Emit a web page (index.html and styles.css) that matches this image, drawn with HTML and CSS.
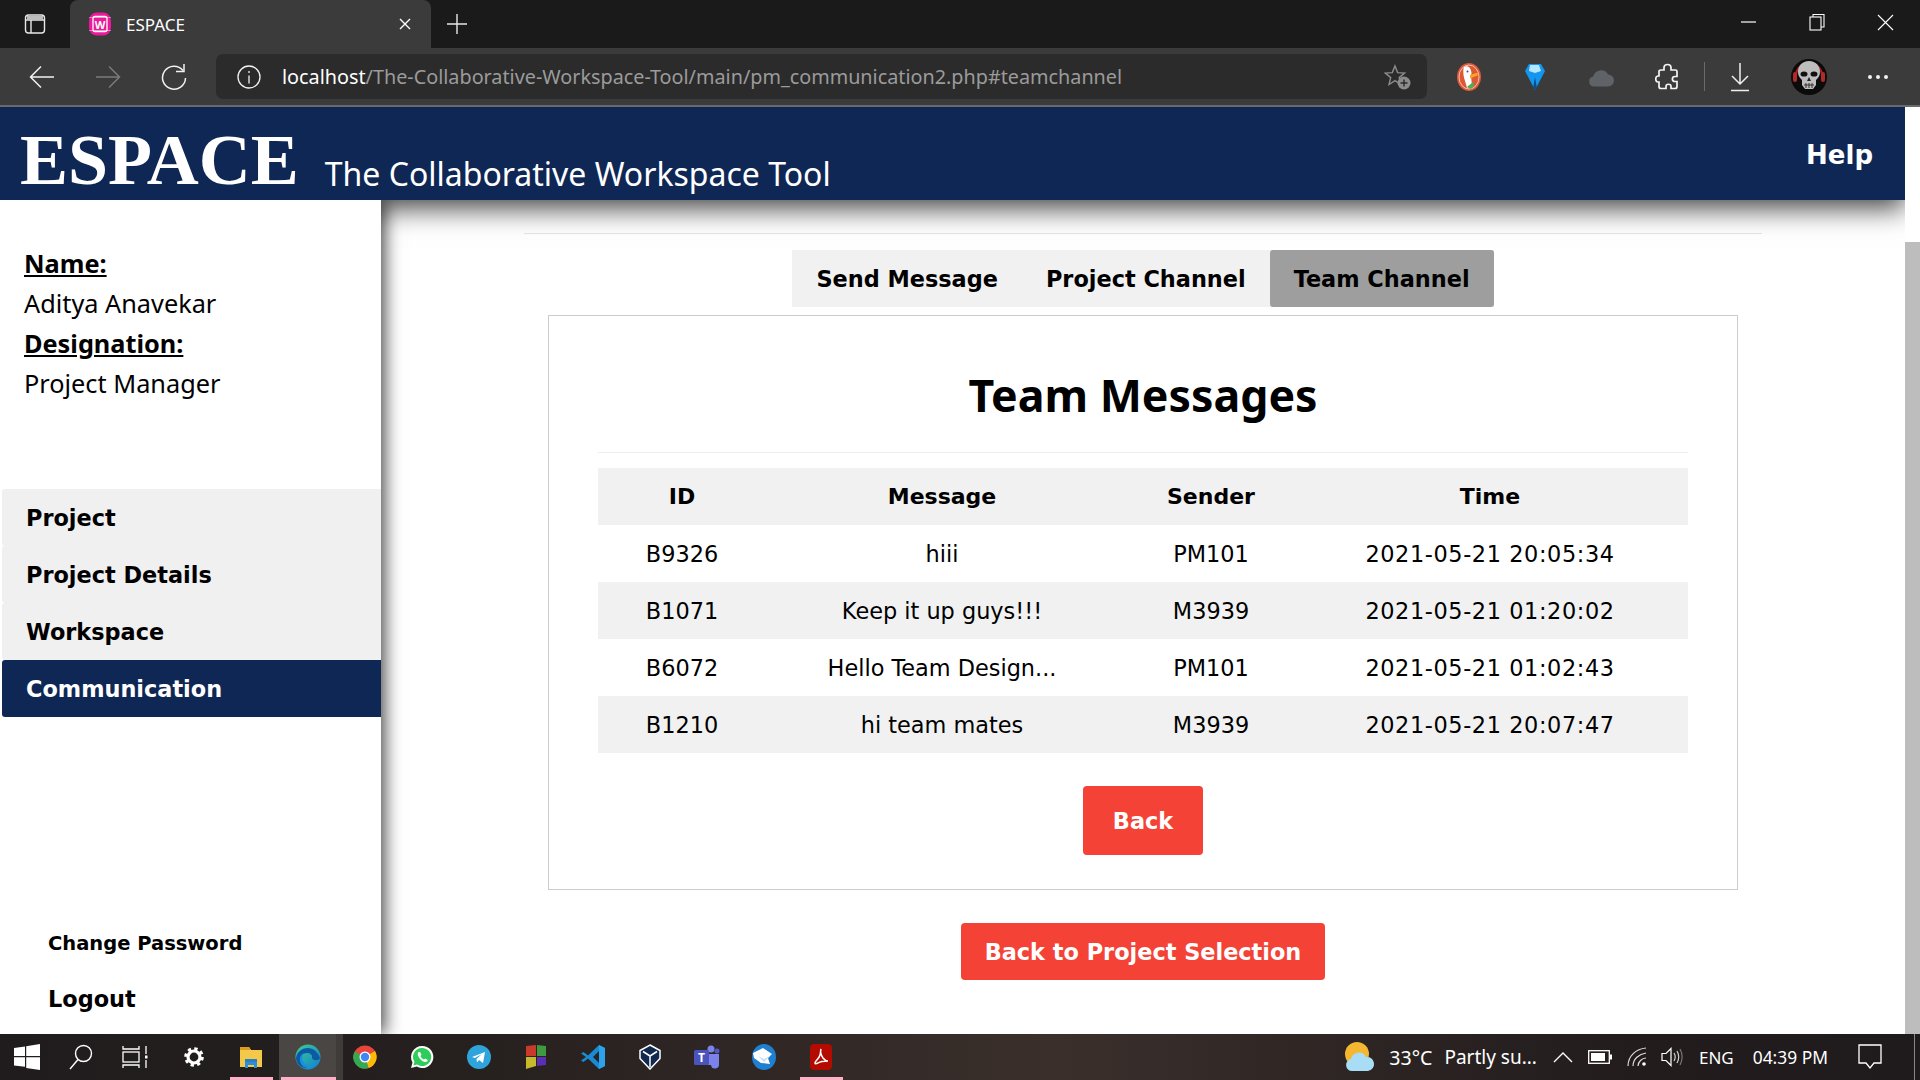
FILE: index.html
```html
<!DOCTYPE html>
<html lang="en">
<head>
<meta charset="utf-8">
<title>ESPACE</title>
<link rel="stylesheet" href="styles.css">
</head>
<body>
<div class="browser">
  <div class="tabstrip">
    <div class="strip-slot">
      <svg width="22" height="22" viewBox="0 0 22 22" fill="none" stroke="#e8e8e8" stroke-width="1.4"><rect x="1.5" y="2" width="19" height="18" rx="3"/><path d="M1.5 7h19M7 7v13"/><path d="M3 2.8h16v4H3z" fill="#bdbdbd" stroke="none"/></svg>
    </div>
    <div class="tab">
      <svg class="favicon" width="24" height="24" viewBox="0 0 24 24"><rect x="1" y="0.500" width="22" height="23" rx="8" fill="#ea1a9b"/><path d="M1 5.500h22M1 18.500h22" stroke="#fff" stroke-width=".8" stroke-opacity=".5"/><rect x="5" y="4.500" width="14" height="15" rx="2" fill="none" stroke="#fff" stroke-width="1.300"/><text x="12" y="16.500" class="fav-w">W</text></svg>
      <span class="tab-title">ESPACE</span>
      <svg class="tab-close" width="14" height="14" viewBox="0 0 14 14" stroke="#fff" stroke-width="1.4"><path d="M2 2l10 10M12 2L2 12"/></svg>
    </div>
    <div class="plus-slot">
      <svg width="22" height="22" viewBox="0 0 22 22" stroke="#e8e8e8" stroke-width="1.4"><path d="M11 1v20M1 11h20"/></svg>
    </div>
    <div class="win-buttons">
      <div class="win-btn"><svg width="16" height="16" viewBox="0 0 16 16" stroke="#fff" stroke-width="1.2"><path d="M0 8h15"/></svg></div>
      <div class="win-btn"><svg width="16" height="18" viewBox="0 0 16 18" fill="none" stroke="#fff" stroke-width="1.1"><rect x="1" y="4" width="11" height="13"/><path d="M4 4V1.500h11V14h-3"/></svg></div>
      <div class="win-btn"><svg width="17" height="17" viewBox="0 0 17 17" stroke="#fff" stroke-width="1.1"><path d="M1 1l15 15M16 1L1 16"/></svg></div>
    </div>
  </div>
  <div class="toolbar">
    <div class="tool-slot"><svg width="26" height="24" viewBox="0 0 26 24" fill="none" stroke="#f2f2f2" stroke-width="1.5"><path d="M25 12H1.500M12 1.500L1.500 12 12 22.500"/></svg></div>
    <div class="tool-slot"><svg width="26" height="24" viewBox="0 0 26 24" fill="none" stroke="#7b7b7b" stroke-width="1.5"><path d="M1 12h23.500M14 1.500L24.500 12 14 22.500"/></svg></div>
    <div class="tool-slot"><svg width="26" height="28" viewBox="0 0 26 28" fill="none" stroke="#f2f2f2" stroke-width="1.5"><path d="M22 7.500A11.500 11.500 0 1 0 24.500 15"/><path d="M23 1v7.500h-8"/></svg></div>
    <div class="address">
      <svg class="addr-info" width="24" height="24" viewBox="0 0 24 24" fill="none" stroke="#f2f2f2" stroke-width="1.3"><circle cx="12" cy="12" r="11"/><path d="M12 10.500v8M12 6v2"/></svg>
      <span class="url"><span class="url-host">localhost</span>/The-Collaborative-Workspace-Tool/main/pm_communication2.php#teamchannel</span>
      <svg class="addr-star" width="28" height="28" viewBox="0 0 28 28"><path d="M11 3l2.600 6.600 7 .5-5.400 4.500 1.700 6.900L11 17.700l-6 3.800 1.700-6.900L1.300 10.100l7-.5z" fill="none" stroke="#8c8c8c" stroke-width="1.4"/><circle cx="20" cy="20" r="6.500" fill="#8c8c8c"/><path d="M20 16.500v7M16.500 20h7" stroke="#2b2b2b" stroke-width="1.4"/></svg>
    </div>
    <div class="tool-slot tool-first">
      <svg width="26" height="30" viewBox="0 0 26 30"><ellipse cx="13" cy="15" rx="12" ry="14" fill="#de5833"/><ellipse cx="13" cy="15" rx="10" ry="12" fill="none" stroke="#f3c4b6" stroke-width="1"/><path d="M8 5c4-2 7 1 7.500 6l-.5 3 1 10-5 2c-1-5-3-9-3.500-13C7.300 10 7 7 8 5z" fill="#fff"/><path d="M14 13l8-2.500-.5 3-7.500 3z" fill="#f5a623"/><path d="M11 25l6-5 1 4-3 3z" fill="#4caf50"/><circle cx="11.500" cy="9.500" r="1" fill="#2d4f8e"/></svg>
    </div>
    <div class="tool-slot">
      <svg width="22" height="28" viewBox="0 0 22 28"><path d="M5 1h12l4 7-10 19L1 8z" fill="#1296f0"/><path d="M6 2h9l2 6-6 2-6-2z" fill="#b9e6ff"/><path d="M11 14l2 12h-4z" fill="#0a4d88"/></svg>
    </div>
    <div class="tool-slot">
      <svg width="26" height="22" viewBox="0 0 26 22"><path d="M6 20.500a5 5 0 0 1-.8-9.900A8 8 0 0 1 20 8.500a6 6 0 0 1 0 12z" fill="#5f6368"/></svg>
    </div>
    <div class="tool-slot">
      <svg width="24" height="28" viewBox="0 0 24 28" fill="none" stroke="#f5f5f5" stroke-width="1.7"><path d="M9 4.500c0-4 7-4 7 0v2.500h4.500c1 0 1.500.5 1.500 1.500v5h-2c-3.500 0-3.500 5 0 5h2v5c0 1-.5 2-2 2h-4v-2c0-3-5-3-5 0v2H6c-1 0-2-.5-2-2v-4.500H3c-3 0-3-6 0-6h1V8.500C4 7.500 4.500 7 6 7h3z"/></svg>
    </div>
    <div class="tool-sep"></div>
    <div class="tool-slot">
      <svg width="20" height="30" viewBox="0 0 20 30" fill="none" stroke="#efefef" stroke-width="1.5"><path d="M10 1v21M2 14l8 8 8-8M1 28.500h18"/></svg>
    </div>
    <div class="tool-slot tool-avatar">
      <svg width="38" height="36" viewBox="0 0 38 36"><ellipse cx="19" cy="18" rx="18" ry="18" fill="#0b0b0b"/><path d="M6 17a13 13 0 0 1 26 0" fill="none" stroke="#a22" stroke-width="2"/><rect x="3" y="13" width="4" height="10" rx="2" fill="#b22a2a"/><rect x="31" y="13" width="4" height="10" rx="2" fill="#b22a2a"/><path d="M19 2c7 0 11 5 11 11 0 4-2 6-4 8v5l-3 4h-8l-3-4v-5c-2-2-4-4-4-8C8 7 12 2 19 2z" fill="#bdbdbd"/><ellipse cx="14" cy="15" rx="3.500" ry="2.600" fill="#111"/><ellipse cx="24" cy="15" rx="3.500" ry="2.600" fill="#111"/><path d="M19 18l-2 4h4z" fill="#222"/><path d="M14 26h10M16 24v5M19 24v5M22 24v5" stroke="#333" stroke-width="1"/></svg>
    </div>
    <div class="tool-slot">
      <svg width="22" height="6" viewBox="0 0 22 6" fill="#f2f2f2"><circle cx="3" cy="3" r="2"/><circle cx="11" cy="3" r="2"/><circle cx="19" cy="3" r="2"/></svg>
    </div>
  </div>
</div>

<div class="viewport">
  <div class="page">
    <header class="app-header">
      <h1 class="logo">ESPACE</h1>
      <span class="tagline">The Collaborative Workspace Tool</span>
      <a class="help">Help</a>
    </header>
    <div class="app-body">
      <aside class="sidebar">
        <div class="user-info">
          <div class="info-label">Name:</div>
          <div class="info-value">Aditya Anavekar</div>
          <div class="info-label">Designation:</div>
          <div class="info-value">Project Manager</div>
        </div>
        <nav class="side-nav">
          <a class="nav-item">Project</a>
          <a class="nav-item">Project Details</a>
          <a class="nav-item">Workspace</a>
          <a class="nav-item nav-active">Communication</a>
        </nav>
        <div class="side-links">
          <a class="link-small">Change Password</a>
          <a class="link-large">Logout</a>
        </div>
      </aside>
      <main class="main">
        <hr class="top-rule">
        <div class="tabs">
          <a class="tab-link">Send Message</a>
          <a class="tab-link">Project Channel</a>
          <a class="tab-link tab-current">Team Channel</a>
        </div>
        <section class="card">
          <h2 class="card-title">Team Messages</h2>
          <hr class="card-rule">
          <table class="msg-table">
            <colgroup><col class="col-id"><col class="col-msg"><col class="col-sender"><col class="col-time"></colgroup>
            <thead>
              <tr><th class="cell-id">ID</th><th>Message</th><th>Sender</th><th>Time</th></tr>
            </thead>
            <tbody>
              <tr><td class="cell-id">B9326</td><td>hiii</td><td>PM101</td><td class="cell-time">2021-05-21 20:05:34</td></tr>
              <tr class="row-alt"><td class="cell-id">B1071</td><td>Keep it up guys!!!</td><td>M3939</td><td class="cell-time">2021-05-21 01:20:02</td></tr>
              <tr><td class="cell-id">B6072</td><td>Hello Team Design...</td><td>PM101</td><td class="cell-time">2021-05-21 01:02:43</td></tr>
              <tr class="row-alt"><td class="cell-id">B1210</td><td>hi team mates</td><td>M3939</td><td class="cell-time">2021-05-21 20:07:47</td></tr>
            </tbody>
          </table>
          <a class="btn btn-back">Back</a>
        </section>
        <a class="btn btn-wide">Back to Project Selection</a>
      </main>
    </div>
  </div>
  <div class="scrollbar"><div class="scroll-thumb"></div></div>
</div>

<footer class="taskbar">
  <div class="tb-start"><svg width="26" height="26" viewBox="0 0 26 26" fill="#fff"><path d="M0 4l11-1.600V12H0zM12.200 2.200L26 0v12H12.200zM0 13.200h11v9.600L0 21.400zM12.200 13.200H26V26l-13.800-2z"/></svg></div>
  <div class="tb-sys"><svg width="24" height="26" viewBox="0 0 24 26" fill="none" stroke="#fff" stroke-width="1.4"><circle cx="14.500" cy="9.500" r="8"/><path d="M9 15.500L1 25"/></svg></div>
  <div class="tb-sys"><svg width="26" height="24" viewBox="0 0 26 24" fill="none" stroke="#fff" stroke-width="1.3"><path d="M1 1v3h16V1M1 23v-3h16v3"/><rect x="1" y="7" width="16" height="10"/><path d="M24 1v8M24 15v8"/><rect x="23" y="10.500" width="2.500" height="3" fill="#fff" stroke="none"/></svg></div>
  <div class="tb-icon tb-gear"><svg width="20" height="20" viewBox="0 0 20 20"><circle cx="10" cy="10" r="6" fill="none" stroke="#fff" stroke-width="3.200"/><circle cx="10" cy="10" r="8.300" fill="none" stroke="#fff" stroke-width="3" stroke-dasharray="3.300 3.220"/></svg></div>
  <div class="tb-icon"><svg width="24" height="24" viewBox="0 0 24 24"><path d="M1 2h9l2 3h11v17H1z" fill="#f4c94a"/><path d="M1 2h9l2 3H1z" fill="#dd9a20"/><path d="M6 16h12v7h-3v-3H9v3H6z" fill="#2f8fd6"/><path d="M6 14h12v3H6z" fill="#2a7fc4"/></svg></div>
  <div class="tb-icon tb-running">
    <svg width="26" height="26" viewBox="0 0 26 26"><defs><linearGradient id="edgeA" x1="0" y1="0" x2="1" y2="1"><stop offset="0" stop-color="#3ecf8e"/><stop offset="1" stop-color="#0f7fd0"/></linearGradient></defs><circle cx="13" cy="13" r="12.500" fill="url(#edgeA)"/><path d="M1 14C2 7 8 4 13 4c5 0 10 4 12 10-1 3-7 3-8 0 1-3-2-5-5-5-5 0-8 5-6 10 1 3 4 5 8 5-8 1-13-4-13-10z" fill="#0c59a4"/><path d="M7 21c-3-4-3-10 2-12-3 3-2 10 3 12 4 1 9 0 12-4-2 6-12 9-17 4z" fill="#1a8fe0"/></svg>
    <span class="tb-sliver"></span>
  </div>
  <div class="tb-icon"><svg width="24" height="24" viewBox="0 0 24 24"><circle cx="12" cy="12" r="11.500" fill="#e8453c"/><path d="M12 12L22 6a11.500 11.500 0 0 1-6.500 17z" fill="#fbbc05"/><path d="M12 12l3.500 11A11.500 11.500 0 0 1 1.700 6.500z" fill="#34a853"/><circle cx="12" cy="12" r="5.500" fill="#fff"/><circle cx="12" cy="12" r="4.200" fill="#4285f4"/></svg></div>
  <div class="tb-icon"><svg width="24" height="24" viewBox="0 0 24 24"><path d="M12 1a11 11 0 0 0-9.500 16.500L1 23l5.800-1.500A11 11 0 1 0 12 1z" fill="#fff"/><path d="M12 3a9 9 0 0 0-7.600 13.800L3.500 20.500l3.700-1A9 9 0 1 0 12 3z" fill="#2ecc5a"/><path d="M8.500 7c-1 1-1.200 3 .5 5.500 2 3 4.500 4.500 6.500 4.500 1.200 0 2.200-1 2.300-2l-2.500-1.500-1.200 1c-1.500-.5-3-2-3.600-3.600l1-1.200L10 7z" fill="#fff"/></svg></div>
  <div class="tb-icon"><svg width="24" height="24" viewBox="0 0 24 24"><circle cx="12" cy="12" r="12" fill="#2fa3dc"/><path d="M5 12l13-5-2 11-4-3-2 2.500-.5-3.500 5.500-5-7 4z" fill="#fff"/></svg></div>
  <div class="tb-icon"><svg width="24" height="26" viewBox="0 0 24 26"><path d="M2 2l10-1v11H2z" fill="#c93a2b"/><path d="M13 1l9 1v10h-9z" fill="#3e9a3e"/><path d="M2 13h10v9l-10 3z" fill="#c8b82b"/><path d="M13 13h9v8l-9 1z" fill="#5a2fb5"/></svg></div>
  <div class="tb-icon"><svg width="24" height="26" viewBox="0 0 24 26"><path d="M18 1l6 3v18l-6 3L7 14.500 2.500 18 0 16.500 5 13 0 9.500 2.500 8 7 11.500z" fill="#1a8ad4"/><path d="M18 7l-6 6 6 6z" fill="#25262b"/><path d="M18 1l6 3v18l-6 3z" fill="#2aa3ea"/></svg></div>
  <div class="tb-icon"><svg width="22" height="26" viewBox="0 0 22 26"><path d="M11 1l10 5.500v8L11 25 1 14.500v-8z" fill="#11294f" stroke="#fff" stroke-width="1.500"/><path d="M4 7.500l7 4.500 7-4.500M11 12v11" fill="none" stroke="#fff" stroke-width="1.500"/></svg></div>
  <div class="tb-icon"><svg width="26" height="26" viewBox="0 0 26 26"><circle cx="17" cy="5" r="3.500" fill="#7b83eb"/><circle cx="23" cy="7" r="2.500" fill="#5059c9"/><path d="M14 10h11v10a4 4 0 0 1-8 1h-3z" fill="#7b83eb"/><rect x="0" y="6" width="15" height="15" rx="1.500" fill="#4b53bc"/><text x="7.500" y="18" class="teams-t">T</text></svg></div>
  <div class="tb-icon"><svg width="24" height="26" viewBox="0 0 24 26"><ellipse cx="12" cy="13" rx="12" ry="13" fill="#1f7fd0"/><path d="M1 9l10-5 9 6-4 4 2 6-9-1-7-5z" fill="#fff"/><path d="M6 12l6 3 6-3-6 6z" fill="#c9dff2"/></svg></div>
  <div class="tb-icon"><svg width="24" height="26" viewBox="0 0 24 26"><rect x="1" y="0" width="22" height="26" rx="4" fill="#b30b00"/><path d="M12 5c-1 3 0 6 2 9 1.500 2 3 3 5 3-3 0-7 0-10 2-2 1-3 1-3 0 0-2 4-4 5-8 .5-2 .5-4 1-6z" fill="none" stroke="#fff" stroke-width="1.500"/></svg></div>
  <div class="tray">
    <svg class="tray-weather" width="32" height="30" viewBox="0 0 32 30"><circle cx="14" cy="12" r="12" fill="#f5b731"/><path d="M9 29a6 6 0 0 1-1-11.900A8 8 0 0 1 23 15a5.500 5.500 0 0 1 2 14z" fill="#a9dcf5"/></svg>
    <span class="tray-temp">33°C</span>
    <span class="tray-cond">Partly su...</span>
    <svg class="tray-chev" width="20" height="12" viewBox="0 0 20 12" fill="none" stroke="#fff" stroke-width="1.4"><path d="M1 11l9-9 9 9"/></svg>
    <svg class="tray-batt" width="24" height="14" viewBox="0 0 24 14"><rect x=".7" y=".7" width="20.600" height="12.600" fill="none" stroke="#fff" stroke-width="1.300"/><rect x="3" y="3" width="14" height="8" fill="#fff"/><rect x="22" y="4.500" width="2" height="5" fill="#fff"/></svg>
    <svg class="tray-wifi" width="20" height="20" viewBox="0 0 20 20" fill="none" stroke="#fff" stroke-width="1.2"><path d="M1 19C1 9 9 2 19 1M6 19c0-7 6-12 13-13M11 19c0-4 4-8 8-8" stroke-opacity=".85"/><circle cx="17" cy="17" r="1.800" fill="#fff" stroke="none"/></svg>
    <svg class="tray-vol" width="22" height="20" viewBox="0 0 22 20" fill="none" stroke="#fff" stroke-width="1.2"><path d="M1 6.500h4L10 1.500v17l-5-5H1z"/><path d="M13 6c1.500 2.500 1.500 5.500 0 8M16 4c2 3.500 2 8.500 0 12" stroke-opacity=".8"/><path d="M19 2c2.500 4.500 2.500 11 0 16" stroke-opacity=".4"/></svg>
    <span class="tray-lang">ENG</span>
    <span class="tray-time">04:39 PM</span>
    <svg class="tray-note" width="24" height="26" viewBox="0 0 24 26" fill="none" stroke="#fff" stroke-width="1.3"><path d="M1 1h22v18h-7l-4 5-4-5H1z"/></svg>
    <span class="tray-line"></span>
  </div>
  <span class="run-mark run-explorer"></span>
  <span class="run-mark run-edge"></span>
  <span class="run-mark run-acrobat"></span>
</footer>
</body>
</html>
```
FILE: styles.css
```css
* { box-sizing: border-box; }
html, body { margin: 0; height: 100%; overflow: hidden; }
body {
  display: flex;
  flex-direction: column;
  height: 1080px;
  background: #fff;
  font-family: "Noto Sans", sans-serif;
  color: #000;
}
svg { display: block; flex: none; }
a { color: inherit; text-decoration: none; }

/* browser chrome */
.browser { flex: none; height: 107px; display: flex; flex-direction: column; }
.tabstrip { height: 48px; background: #1a1a1a; display: flex; align-items: stretch; }
.strip-slot { width: 70px; display: flex; align-items: center; justify-content: center; }
.tab {
  width: 361px;
  background: #3b3b3b;
  border-radius: 8px 8px 0 0;
  display: flex;
  align-items: center;
  padding: 0 19px 0 18px;
  color: #fff;
  font-size: 17px;
}
.fav-w { font: 700 11px "Noto Sans", sans-serif; fill: #fff; text-anchor: middle; }
.teams-t { font: 700 12px "Noto Sans", sans-serif; fill: #fff; text-anchor: middle; }
.tab-title { margin-left: 14px; flex: 1; }
.plus-slot { width: 52px; display: flex; align-items: center; justify-content: center; }
.win-buttons { margin-left: auto; display: flex; padding-right: 1px; }
.win-btn { width: 68px; display: flex; align-items: center; justify-content: center; padding-bottom: 4px; }
.toolbar {
  height: 59px;
  background: #3b3b3b;
  border-bottom: 2px solid #6a6a6a;
  display: flex;
  align-items: center;
  padding-left: 9px;
}
.tool-slot { width: 66px; flex: none; display: flex; align-items: center; justify-content: center; }
.tool-first { margin-left: 9px; }
.tool-avatar { width: 72px; }
.tool-sep { width: 1px; height: 29px; background: #6a6a6a; margin-left: 4px; margin-right: 2px; }
.address {
  width: 1211px;
  height: 45px;
  margin-left: 9px;
  background: #2b2b2b;
  border-radius: 7px;
  display: flex;
  align-items: center;
  padding: 0 15px 0 21px;
}
.url { margin-left: 21px; font-size: 19.8px; color: #9b9b9b; white-space: nowrap; flex: 1; }
.url-host { color: #fff; }

/* page */
.viewport { flex: 1; min-height: 0; display: flex; overflow: hidden; }
.page { width: 1905px; display: flex; flex-direction: column; overflow: hidden; }
.scrollbar { width: 15px; background: #fff; padding-top: 135px; }
.scroll-thumb { height: 100%; background: #bdbdbd; }
.app-header {
  flex: none;
  height: 93px;
  background: #0f2755;
  color: #fff;
  display: flex;
  align-items: flex-start;
  padding: 0 32px 0 20px;
  position: relative;
  box-shadow: 0 8px 26px rgba(0, 0, 0, .75);
}
.logo {
  margin: 9px 0 0;
  font: 700 72px/88px "Liberation Serif", serif;
}
.tagline { margin: 45px 0 0 26px; font-size: 32px; line-height: 44px; }
.help { margin: 26px 0 0 auto; font: 700 26px/44px "DejaVu Sans", sans-serif; }
.app-body { flex: 1; min-height: 0; display: flex; }

/* sidebar */
.sidebar {
  width: 381px;
  flex: none;
  background: #fff;
  display: flex;
  flex-direction: column;
  position: relative;
  box-shadow: 4px 0 16px rgba(0, 0, 0, .7);
  clip-path: inset(0 -40px 0 0);
}
.user-info { padding: 43px 0 0 24px; font-size: 25.3px; line-height: 40px; }
.info-label { font-weight: 700; text-decoration: underline; }
.side-nav { margin: 86px 0 0 2px; display: flex; flex-direction: column; }
.nav-item {
  height: 57px;
  padding: 1px 0 0 24px;
  background: #f0f0f0;
  border-radius: 3px 0 0 3px;
  font: 700 22.4px/56px "DejaVu Sans", sans-serif;
}
.nav-active { background: #0f2755; color: #fff; }
.side-links { margin-top: auto; padding: 0 0 15px 48px; display: flex; flex-direction: column; gap: 15px; }
.link-small { font: 700 19.5px/40px "DejaVu Sans", sans-serif; }
.link-large { font: 700 22.4px/40px "DejaVu Sans", sans-serif; }

/* main */
.main { flex: 1; min-width: 0; display: flex; flex-direction: column; align-items: center; padding-top: 33px; }
.top-rule { width: 1238px; height: 1px; margin: 0; border: 0; background: #e6e6e6; }
.tabs { margin-top: 16px; display: flex; background: #f1f1f1; }
.tab-link {
  height: 57px;
  padding: 1px 24px 0;
  font: 700 22.4px/56px "DejaVu Sans", sans-serif;
}
.tab-current { background: #9e9e9e; border-radius: 3px; }
.card {
  width: 1190px;
  height: 575px;
  margin-top: 8px;
  border: 1px solid #ccc;
  padding: 0 49px;
  display: flex;
  flex-direction: column;
  align-items: center;
}
.card-title { margin: 0; height: 136px; font-size: 44.7px; font-weight: 700; line-height: 158px; }
.card-rule { width: 100%; height: 1px; margin: 0; border: 0; background: #eee; }
.msg-table { width: 100%; margin-top: 15px; border-collapse: collapse; table-layout: fixed; font: 400 22.4px "DejaVu Sans", sans-serif; }
.col-id { width: 156px; }
.col-msg { width: 376px; }
.col-sender { width: 162px; }
.col-time { width: 396px; }
.msg-table th, .msg-table td { height: 57px; padding: 0; text-align: center; }
.msg-table th { background: #f1f1f1; font-weight: 700; font-size: 22px; }
.msg-table .cell-id { padding-left: 12px; }
.msg-table .cell-time { letter-spacing: .6px; }
.row-alt { background: #f1f1f1; }
.btn {
  display: block;
  background: #f44336;
  color: #fff;
  border-radius: 4px;
  font: 700 22.4px "DejaVu Sans", sans-serif;
  text-align: center;
}
.btn-back { width: 120px; height: 69px; line-height: 71px; margin-top: 33px; }
.btn-wide { width: 364px; height: 57px; line-height: 59px; margin-top: 33px; }

/* taskbar */
.taskbar {
  flex: none;
  height: 46px;
  background: linear-gradient(90deg, #201c1d 0%, #26201f 25%, #3a2f2b 55%, #221c1d 85%, #1f1a1c 100%);
  display: flex;
  align-items: center;
  color: #fff;
  position: relative;
}
.tb-start { width: 54px; display: flex; justify-content: center; }
.tb-sys { width: 54px; display: flex; justify-content: center; }
.tb-icon { width: 57px; height: 46px; display: flex; align-items: center; justify-content: center; position: relative; }
.tb-gear { margin-left: 3px; }
.tb-running { background: #4a4644; }
.tb-sliver { position: absolute; left: 100%; top: 0; width: 7px; height: 46px; background: #3f3b39; }
.tray { margin-left: auto; display: flex; align-items: center; font-size: 19px; white-space: nowrap; }
.tray-weather { margin-right: 2px; }
.tray-temp { margin-left: 12px; font-size: 19.6px; }
.tray-cond { margin-left: 12px; }
.tray-chev { margin-left: 16px; }
.tray-batt { margin-left: 15px; }
.tray-wifi { margin-left: 15px; }
.tray-vol { margin-left: 14px; }
.tray-lang { margin-left: 16px; font-size: 17px; }
.tray-time { margin-left: 19px; font-size: 17.4px; }
.tray-note { margin-left: 30px; }
.tray-line { width: 1px; height: 46px; background: #888; margin: 0 5px 0 32px; }
.run-mark { position: absolute; bottom: 0; height: 3px; background: #ffb0c8; }
.run-explorer { left: 230px; width: 43px; }
.run-edge { left: 281px; width: 55px; }
.run-acrobat { left: 800px; width: 43px; }
```
